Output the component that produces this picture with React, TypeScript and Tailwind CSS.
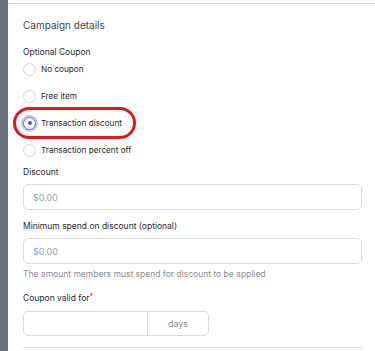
import React, { useState } from "react";

const options = ["No coupon", "Free item", "Transaction discount", "Transaction percent off"];

function Radio({ checked }: { checked: boolean }) {
  if (checked) {
    return (
      <span className="flex h-[13px] w-[13px] shrink-0 items-center justify-center rounded-full border border-[#6366f1] bg-white ring-[2px] ring-[#c7c9fb]">
        <span className="h-[4px] w-[4px] rounded-full bg-[#4f46e5]" />
      </span>
    );
  }
  return <span className="h-[13px] w-[13px] shrink-0 rounded-full border border-[#d4d4d8] bg-white" />;
}

export default function App() {
  const [selected, setSelected] = useState("Transaction discount");

  return (
    <div
      className="flex h-[351px] w-[375px] overflow-hidden bg-white text-[#27272a]"
      style={{ fontFamily: "Inter, 'Liberation Sans', sans-serif" }}
    >
      <div className="w-[8px] shrink-0 bg-[#6b7280]" />
      <div className="flex-1">
        <div className="mt-[3px] h-px bg-[#d9d9d9]" />
        <div className="pl-[15px] pr-[13px]">
          <h2 className="mt-[14px] text-[10px] leading-[14px] text-[#3f3f46]">Campaign details</h2>

          <div className="mt-[15px] text-[8.5px] leading-[10px]">Optional Coupon</div>
          <div className="flex flex-col gap-[3px]">
            {options.map((o) => (
              <button
                key={o}
                onClick={() => setSelected(o)}
                className="relative flex h-[24px] items-center gap-[5px] text-left text-[8.2px]"
              >
                {selected === o && (
                  <span className="pointer-events-none absolute left-[-10px] top-[-4px] h-[32px] w-[123px] rounded-[16px] border-[3px] border-[#e4161b]" />
                )}
                <Radio checked={selected === o} />
                <span className="leading-[12px]">{o}</span>
              </button>
            ))}
          </div>

          <div className="mt-[4px] text-[8.5px] leading-[12px]">Discount</div>
          <input
            placeholder="$0.00"
            className="mt-[6px] h-[26px] w-full rounded-[5px] border border-[#d9d9de] px-[9px] text-[9px] outline-none placeholder:text-[#9ca3af]"
          />

          <div className="mt-[10px] text-[8.5px] leading-[12px]">Minimum spend on discount (optional)</div>
          <input
            placeholder="$0.00"
            className="mt-[6px] h-[26px] w-full rounded-[5px] border border-[#d9d9de] px-[9px] text-[9px] outline-none placeholder:text-[#9ca3af]"
          />
          <div className="mt-[4px] text-[8.5px] leading-[12px] text-[#8a8a92]">
            The amount members must spend for discount to be applied
          </div>

          <div className="mt-[12px] text-[8.5px] leading-[12px]">
            Coupon valid for<span className="align-top text-[7px] leading-[10px] text-[#e4161b]">*</span>
          </div>
          <div className="mt-[7px] flex h-[25px] w-[186px] overflow-hidden rounded-[5px] border border-[#d9d9de]">
            <input className="w-[124px] border-r border-[#d9d9de] px-[9px] text-[9px] outline-none" />
            <div className="flex flex-1 items-center justify-center text-[9px] text-[#8a8a92]">days</div>
          </div>

          <div className="mt-[11px] h-px bg-[#dcdcdc]" />
        </div>
      </div>
    </div>
  );
}
